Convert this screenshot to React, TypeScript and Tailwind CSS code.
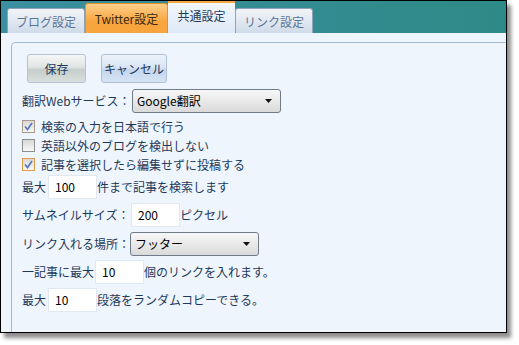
import React from 'react';

const FONT = { fontFamily: '"Noto Sans CJK JP", "Noto Sans", sans-serif' };

function Tab({ label, kind }: { label: string; kind: 'idle' | 'hot' | 'active' }) {
  if (kind === 'hot') {
    return (
      <div className="flex h-[30px] w-[83px] items-center justify-center rounded-t-[3px] border border-b-0 border-[#e0912c] bg-[linear-gradient(#fed08a,#f9a53f_60%,#f7a43c)] text-[12px] text-[#3a2a14]">
        {label}
      </div>
    );
  }
  if (kind === 'active') {
    return (
      <div className="flex h-[33px] w-[67px] flex-col rounded-t-[2px] bg-[linear-gradient(#f4f8fd,#dde9f7)]">
        <div className="h-[3px] bg-[#f6a83e]" />
        <div className="flex flex-1 items-center justify-center pb-[5px] text-[12px] text-[#1e395b]">{label}</div>
      </div>
    );
  }
  return (
    <div className="flex h-[25px] w-[78px] items-center justify-center rounded-t-[3px] border border-b-0 border-[#8fa2b8] bg-[linear-gradient(#f2f5f9,#cfdbe9)] pt-[2px] text-[12px] text-[#5b7596]">
      {label}
    </div>
  );
}

function Check({ checked, hot, tone }: { checked: boolean; hot?: boolean; tone?: string }) {
  return (
    <span
      className={`mr-[6px] flex h-[13px] w-[13px] items-center justify-center border ${
        hot ? 'border-[#e39b44]' : tone === 'warm' ? 'border-[#a89a88]' : 'border-[#8e8f8f]'
      } bg-[linear-gradient(#d9d9d9,#f6f6f6)]`}
    >
      {checked && (
        <svg width="11" height="11" viewBox="0 0 11 11">
          <path d="M2 5.5 L4.5 8.5 L9 2" fill="none" stroke="#5a78c0" strokeWidth="1.7" />
        </svg>
      )}
    </span>
  );
}

function Select({ value, width }: { value: string; width: string }) {
  return (
    <div
      className={`flex h-[24px] ${width} items-center justify-between rounded-[3px] border border-[#707b88] bg-[linear-gradient(#f7f7f7,#e9e9e9_50%,#dadada)] pl-[4px] pr-[8px] text-[12px] text-black`}
    >
      <span>{value}</span>
      <svg width="7" height="4" viewBox="0 0 7 4">
        <path d="M0 0 H7 L3.5 4 Z" fill="#111" />
      </svg>
    </div>
  );
}

function Field({ value }: { value: string }) {
  return (
    <div className="flex h-[24px] w-[49px] items-center border border-[#e2e8ef] bg-white pl-[6px] text-[12px] text-black">
      {value}
    </div>
  );
}

export default function App() {
  return (
    <div className="h-[345px] w-[519px] bg-white" style={FONT}>
      <div className="flex h-[333px] w-[507px] flex-col overflow-hidden border border-black shadow-[4px_5px_4px_rgba(0,0,0,0.45)]">
        {/* Tab strip */}
        <div className="flex h-[32px] shrink-0 items-end bg-[linear-gradient(90deg,#3b8fa0,#2e8a87)] pl-[6px]">
          <Tab label="ブログ設定" kind="idle" />
          <Tab label="Twitter設定" kind="hot" />
          <Tab label="共通設定" kind="active" />
          <Tab label="リンク設定" kind="idle" />
        </div>

        {/* Body */}
        <div className="flex flex-1 flex-col bg-[#eef5fd] pl-[10px] pt-[9px]">
          <div className="flex w-[520px] flex-1 flex-col rounded-tl-[5px] border-l border-t border-[#a5b8cd] text-[12px] text-[#1e395b]">
            {/* Buttons */}
            <div className="ml-[15px] mt-[11px] flex gap-[15px]">
              <button className="flex h-[29px] w-[59px] items-center justify-center rounded-[3px] border border-[#b6c2cf] bg-[linear-gradient(#f6f7f7,#dfe4e2_45%,#c5ceca_55%,#d9e0dd)] text-[12px] text-[#1e395b]">
                保存
              </button>
              <button className="flex h-[29px] w-[66px] items-center justify-center rounded-[3px] border border-[#b0c0d4] bg-[linear-gradient(#eef3fb,#d9e5f5_45%,#c4d6ee_55%,#d6e3f5)] text-[12px] text-[#1e395b]">
                キャンセル
              </button>
            </div>

            {/* Translation service */}
            <div className="ml-[10px] mt-[6px] flex h-[24px] items-center">
              <span className="w-[110px]">翻訳Webサービス：</span>
              <Select value="Google翻訳" width="w-[149px]" />
            </div>

            {/* Checkboxes */}
            <div className="ml-[10px] mt-[4px] flex flex-col">
              <label className="flex h-[19px] items-center">
                <Check checked tone="warm" />
                検索の入力を日本語で行う
              </label>
              <label className="flex h-[19px] items-center">
                <Check checked={false} />
                英語以外のブログを検出しない
              </label>
              <label className="flex h-[19px] items-center">
                <Check checked hot />
                記事を選択したら編集せずに投稿する
              </label>
            </div>

            <div className="ml-[10px] mt-[1px] flex h-[24px] items-center">
              <span className="mr-[2px]">最大</span>
              <Field value="100" />
              <span>件まで記事を検索します</span>
            </div>

            <div className="ml-[10px] mt-[4px] flex h-[24px] items-center">
              <span className="w-[109px]">サムネイルサイズ：</span>
              <Field value="200" />
              <span>ピクセル</span>
            </div>

            <div className="ml-[10px] mt-[5px] flex h-[24px] items-center">
              <span className="w-[108px]">リンク入れる場所：</span>
              <Select value="フッター" width="w-[129px]" />
            </div>

            <div className="ml-[10px] mt-[4px] flex h-[24px] items-center">
              <span className="mr-[1px]">一記事に最大</span>
              <Field value="10" />
              <span>個のリンクを入れます。</span>
            </div>

            <div className="ml-[10px] mt-[4px] flex h-[24px] items-center">
              <span className="mr-[2px]">最大</span>
              <Field value="10" />
              <span>段落をランダムコピーできる。</span>
            </div>
          </div>
        </div>
      </div>
    </div>
  );
}
